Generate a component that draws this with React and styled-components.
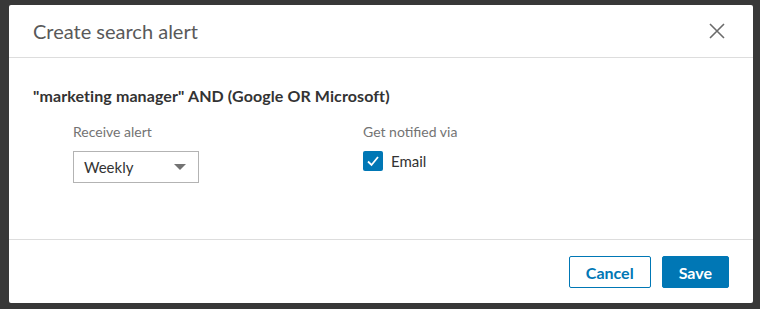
import styled, { createGlobalStyle } from 'styled-components';

const GlobalStyle = createGlobalStyle`
  html, body {
    margin: 0;
    padding: 0;
    background: #383838;
    font-family: Lato, 'Open Sans', 'Liberation Sans', sans-serif;
  }
`;

const Overlay = styled.div`
  width: 760px;
  height: 309px;
  padding: 5px 0 0 9px;
  box-sizing: border-box;
  background: #383838;
`;

const Modal = styled.div`
  display: flex;
  flex-direction: column;
  width: 744px;
  height: 298px;
  background: #ffffff;
  border-radius: 2px;
`;

const Header = styled.div`
  display: flex;
  align-items: center;
  justify-content: space-between;
  height: 53px;
  padding: 0 28px 0 24px;
  box-sizing: border-box;
  border-bottom: 1px solid #dddddd;
`;

const Title = styled.h2`
  margin: 0;
  font-size: 20px;
  font-weight: 400;
  color: #595959;
`;

const CloseBtn = styled.button`
  display: flex;
  padding: 0;
  border: none;
  background: transparent;
  cursor: pointer;
`;

const Body = styled.div`
  flex: 1;
  padding: 28px 24px 0;
`;

const Query = styled.div`
  font-size: 16px;
  line-height: 20px;
  font-weight: 700;
  letter-spacing: 0.1px;
  color: #333333;
`;

const Fields = styled.div`
  display: flex;
  margin-top: 17px;
  padding-left: 40px;
`;

const Field = styled.div`
  display: flex;
  flex-direction: column;
  width: ${(props) => props.width || 'auto'};
`;

const Label = styled.div`
  font-size: 14px;
  line-height: 18px;
  color: #737373;
  margin-bottom: 10px;
`;

const Select = styled.div`
  display: flex;
  align-items: center;
  justify-content: space-between;
  width: 126px;
  height: 32px;
  box-sizing: border-box;
  padding: 0 12px 0 10px;
  border: 1px solid #b3b3b3;
  font-size: 15px;
  color: #333333;
`;

const Caret = styled.span`
  width: 0;
  height: 0;
  border-left: 6px solid transparent;
  border-right: 6px solid transparent;
  border-top: 6px solid #737373;
`;

const CheckRow = styled.label`
  display: flex;
  align-items: center;
  gap: 8px;
  font-size: 15px;
  color: #333333;
`;

const Box = styled.span`
  display: flex;
  align-items: center;
  justify-content: center;
  width: 20px;
  height: 20px;
  border-radius: 2px;
  background: #0077b5;
`;

const Footer = styled.div`
  display: flex;
  justify-content: flex-end;
  gap: 11px;
  padding: 16px 24px 15px;
  border-top: 1px solid #dddddd;
`;

const Button = styled.button`
  height: 32px;
  padding: 0 16px;
  box-sizing: border-box;
  border-radius: 2px;
  border: 1px solid #0077b5;
  background: ${(props) => (props.primary ? '#0077b5' : '#ffffff')};
  color: ${(props) => (props.primary ? '#ffffff' : '#0077b5')};
  font-family: inherit;
  font-size: 16px;
  font-weight: 700;
  cursor: pointer;
`;

const App = () => {
  return (
    <>
      <GlobalStyle />
      <Overlay>
        <Modal>
          <Header>
            <Title>Create search alert</Title>
            <CloseBtn aria-label='Close'>
              <svg width='16' height='16' viewBox='0 0 16 16'>
                <path d='M1 1L15 15M15 1L1 15' stroke='#6b6b6b' strokeWidth='1.6' />
              </svg>
            </CloseBtn>
          </Header>
          <Body>
            <Query>"marketing manager" AND (Google OR Microsoft)</Query>
            <Fields>
              <Field width='290px'>
                <Label>Receive alert</Label>
                <Select>
                  Weekly
                  <Caret />
                </Select>
              </Field>
              <Field>
                <Label>Get notified via</Label>
                <CheckRow>
                  <Box>
                    <svg width='14' height='14' viewBox='0 0 14 14'>
                      <path d='M2 7.5L5.5 11L12 3' stroke='#ffffff' strokeWidth='1.8' fill='none' />
                    </svg>
                  </Box>
                  Email
                </CheckRow>
              </Field>
            </Fields>
          </Body>
          <Footer>
            <Button>Cancel</Button>
            <Button primary>Save</Button>
          </Footer>
        </Modal>
      </Overlay>
    </>
  );
};

export default App;
